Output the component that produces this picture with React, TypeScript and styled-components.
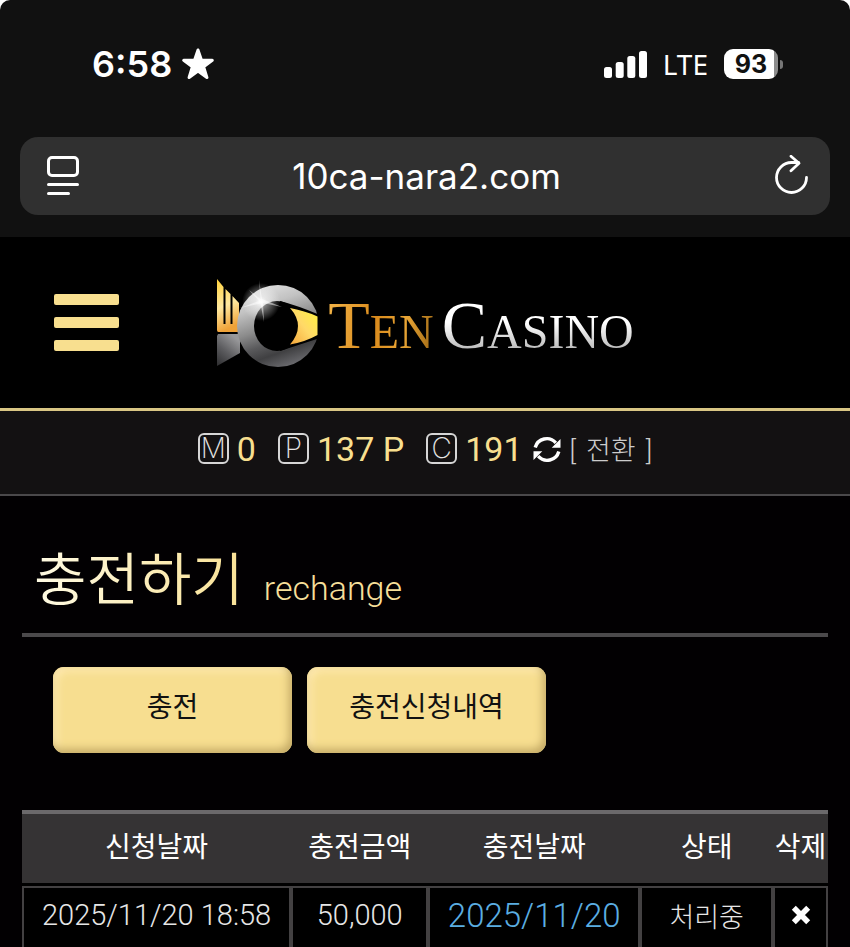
import React from "react";
import styled, { createGlobalStyle } from "styled-components";

const kr = `Roboto, "Noto Sans CJK KR", sans-serif`;
const gold = "#f8df8f";

const GlobalStyle = createGlobalStyle`
  *, *::before, *::after { box-sizing: border-box; }
  body { margin: 0; background: #fff; }
  body::-webkit-scrollbar { display: none; }
  button { font: inherit; border: 0; background: none; padding: 0; cursor: pointer; color: inherit; }
`;

const Page = styled.div`
  height: 100vh;
  overflow: hidden auto;
  scrollbar-width: none;
  background: #020002;
  border-radius: 10px 10px 0 0;
  font-family: ${kr};
  font-weight: 300;
  color: #fff;
`;

const Chrome = styled.header`
  background: #111;
  padding: 40px 20px 22px;
`;

const StatusBar = styled.div`
  display: flex;
  align-items: center;
  justify-content: space-between;
  height: 48px;
  margin-bottom: 49px;
  padding: 0 47px 0 72px;
`;

const StatusGroup = styled.div<{ $gap: number }>`
  display: flex;
  align-items: center;
  gap: ${(p) => p.$gap}px;
`;

const Clock = styled.time`
  font: 600 36px Inter, sans-serif;
`;

const Network = styled.span`
  font: 400 28px/32px "Noto Sans", sans-serif;
`;

const Battery = styled.div`
  display: flex;
  align-items: center;
  gap: 2px;
`;

const BatteryBody = styled.span`
  display: grid;
  place-items: center;
  width: 54px;
  height: 30px;
  border-radius: 9px;
  background: linear-gradient(90deg, #fff 93%, #8c8c8c 93%);
  color: #111;
  font: 700 25px/30px Inter, sans-serif;
`;

const BatteryTip = styled.span`
  width: 3px;
  height: 9px;
  border-radius: 0 4px 4px 0;
  background: #777;
`;

const AddressBar = styled.div`
  display: flex;
  align-items: center;
  justify-content: space-between;
  height: 78px;
  padding: 0 20px 0 25px;
  border-radius: 18px;
  background: #303030;
`;

const Address = styled.span`
  font: 400 35px Inter, sans-serif;
`;

const IconButton = styled.button`
  display: grid;
  place-items: center;
`;

const SiteHeader = styled.div`
  display: grid;
  grid-template-columns: 1fr auto 1fr;
  align-items: center;
  height: 174px;
  padding: 0 54px;
  background: #000;
  border-bottom: 3px solid #d9c684;
`;

const MenuButton = styled.button`
  display: flex;
  flex-direction: column;
  gap: 12px;
  width: 65px;
`;

const MenuBar = styled.span`
  height: 11px;
  width: 100%;
  border-radius: 2px;
  background: ${gold};
`;

const Logo = styled.a`
  display: flex;
  align-items: center;
  gap: 8px;
  text-decoration: none;
`;

const LogoWord = styled.span<{ $fill: string }>`
  display: block;
  padding-top: 12px;
  font: 400 48px/80px "Liberation Serif", serif;
  color: transparent;
  background: ${(p) => p.$fill};
  background-clip: text;
  -webkit-background-clip: text;
  &::first-letter { font-size: 68px; }
`;

const Balance = styled.div`
  display: flex;
  align-items: center;
  justify-content: center;
  height: 85px;
  padding-bottom: 8px;
  background: #131112;
  border-bottom: 2px solid #4a484a;
`;

const Badge = styled.span`
  display: grid;
  place-items: center;
  width: 31px;
  height: 31px;
  margin-right: 8px;
  border: 2px solid #d6d6d6;
  border-radius: 6px;
  color: #e4e4e4;
  font: 200 28px/27px Inter, sans-serif;
`;

const Amount = styled.span`
  margin-right: 22px;
  color: ${gold};
  font-size: 34px;
  font-weight: 400;
  &:last-of-type { margin-right: 10px; }
`;

const Convert = styled.button`
  display: flex;
  align-items: baseline;
  gap: 10px;
  margin-left: 9px;
  color: #ccc;
  font-size: 27px;
`;

const Main = styled.main`
  padding: 42px 22px 0;
`;

const Title = styled.h1`
  display: flex;
  align-items: baseline;
  gap: 20px;
  height: 99px;
  margin: 0;
  padding: 3px 0 0 12px;
  border-bottom: 4px solid #4b494b;
  font-weight: 350;
  font-size: 57px;
  line-height: 80px;
`;

const TitleText = styled.span`
  color: transparent;
  background: linear-gradient(90deg, #fffbe4, #f9e195);
  background-clip: text;
  -webkit-background-clip: text;
`;

const Subtitle = styled.small`
  color: #f6df9a;
  font-size: 34px;
  font-weight: 300;
`;

const Tabs = styled.nav`
  display: flex;
  gap: 15px;
  margin: 30px 31px 57px;
`;

const Tab = styled.button`
  width: 239px;
  height: 86px;
  padding-bottom: 10px;
  border-radius: 11px;
  background: #f7de90;
  color: #111;
  font-size: 28px;
  font-weight: 400;
  box-shadow: inset -3px -4px 8px #c4aa65, inset 4px 4px 8px #ffebb2;
`;

const History = styled.table`
  width: 100%;
  table-layout: fixed;
  border-collapse: separate;
  border-spacing: 0;
`;

const Col = styled.col<{ $w: number }>`
  width: ${(p) => p.$w}%;
`;

const Th = styled.th`
  height: 76px;
  padding: 0 0 8px;
  background: #353334;
  background-clip: padding-box;
  border-top: 4px solid #6b696b;
  border-bottom: 3px solid #000;
  font-size: 28px;
  font-weight: 400;
  white-space: nowrap;
`;

const Td = styled.td<{ $size?: number; $accent?: boolean }>`
  height: 78px;
  padding: 0 0 20px;
  text-align: center;
  white-space: nowrap;
  border: 2px solid #434142;
  background: #000;
  color: ${(p) => (p.$accent ? "#5baee2" : "#e6e6e6")};
  font-size: ${(p) => p.$size ?? 29}px;
`;

const StarIcon = () => (
  <svg width="32" height="32" viewBox="0 0 32 32" fill="#fff" stroke="#fff" strokeWidth="3" strokeLinejoin="round" aria-hidden>
    <path d="M16 2l3.500 10.300H30.300l-8.700 6.500 3.300 10.700L16 23l-8.900 6.500 3.300-10.700L1.700 12.300h10.800z" />
  </svg>
);

const SignalIcon = () => (
  <svg width="43" height="27" viewBox="0 0 43 27" fill="#fff" aria-hidden>
    <rect x="0" y="16" width="8" height="11" rx="2.500" />
    <rect x="11.700" y="11" width="8" height="16" rx="2.500" />
    <rect x="23.300" y="5" width="8" height="22" rx="2.500" />
    <rect x="35" y="0" width="8" height="27" rx="2.500" />
  </svg>
);

const ReaderIcon = () => (
  <svg width="36" height="42" viewBox="0 0 36 42" fill="none" stroke="#fff" strokeWidth="3" strokeLinecap="round" aria-hidden>
    <rect x="3.500" y="2.500" width="29" height="18" rx="3.500" />
    <path d="M3.500 29.500h29M3.500 38.500h20" />
  </svg>
);

const ReloadIcon = () => (
  <svg width="38" height="42" viewBox="0 0 38 42" fill="none" stroke="#fff" strokeWidth="2.800" strokeLinecap="round" strokeLinejoin="round" aria-hidden>
    <path d="M34.500 22.500a15 15 0 1 1-15-15h7" />
    <path d="M19 1.200l8 7-8 7.600" />
  </svg>
);

const SyncIcon = () => (
  <svg width="28" height="28" viewBox="0 0 28 28" fill="none" aria-hidden>
    <path d="M2.200 12.500A12 12 0 0 1 22.800 7.800M25.800 16.500A12 12 0 0 1 5.200 21.200" stroke="#fff" strokeWidth="3.400" />
    <path d="M27.500 4v8.800H18.700zM.500 25V16.200h8.800z" fill="#fff" />
  </svg>
);

const CrossIcon = () => (
  <svg width="20" height="20" viewBox="0 0 20 20" stroke="#fff" strokeWidth="5.600" aria-hidden>
    <path d="M2.800 2.800l14.400 14.400M17.200 2.800l-14.400 14.400" />
  </svg>
);

const Emblem = () => (
  <svg width="104" height="98" viewBox="0 0 104 98" aria-hidden>
    <defs>
      <linearGradient id="ring" x1="0.250" y1="0" x2="0.600" y2="1">
        <stop offset="0" stopColor="#e2e2e2" />
        <stop offset="0.250" stopColor="#c2c2c2" />
        <stop offset="0.500" stopColor="#8c8c8c" />
        <stop offset="0.680" stopColor="#5a5a5c" />
        <stop offset="0.820" stopColor="#404042" />
        <stop offset="1" stopColor="#6a6a6e" />
      </linearGradient>
      <linearGradient id="crown" x1="0" y1="0" x2="0.200" y2="1">
        <stop offset="0" stopColor="#ffd23c" />
        <stop offset="0.550" stopColor="#ffe9a0" />
        <stop offset="1" stopColor="#efa238" />
      </linearGradient>
      <linearGradient id="beam" x1="0" y1="1" x2="1" y2="0">
        <stop offset="0" stopColor="#f5a63a" />
        <stop offset="0.500" stopColor="#ffd968" />
        <stop offset="1" stopColor="#fff43c" />
      </linearGradient>
      <linearGradient id="base" x1="0" y1="1" x2="0.600" y2="0">
        <stop offset="0" stopColor="#2c2c2e" />
        <stop offset="0.500" stopColor="#5c5c5f" />
        <stop offset="1" stopColor="#98989a" />
      </linearGradient>
      <radialGradient id="flare">
        <stop offset="0" stopColor="#fff" />
        <stop offset="0.300" stopColor="#fff" stopOpacity="0.500" />
        <stop offset="1" stopColor="#fff" stopOpacity="0" />
      </radialGradient>
    </defs>
    <path d="M1 5L7.500 13V50H9.500V15L14.500 20V50H16.500V22L23 29V58H2.500Q1 58 1 56z" fill="url(#crown)" />
    <path d="M2 60H24V79L1 92V62z" fill="url(#base)" />
    <circle cx="62" cy="52" r="41" fill="url(#ring)" />
    <ellipse cx="61" cy="52" rx="23" ry="25" fill="#000" />
    <path d="M64 27Q80 31 104 41V64L64 77z" fill="#000" />
    <path d="M74 34Q90 37 101.500 42.500V61Q89 68 74 70.500Q90 52 74 34z" fill="url(#beam)" />
    <circle cx="45" cy="28" r="19" fill="url(#flare)" />
    <path d="M43 6L46 25L66 33L47 29L48 48L44.500 29.500L24 34L43 27L33 16L44.500 25z" fill="#fff" opacity="0.500" />
  </svg>
);

const columns = [
  { label: "신청날짜", width: 33.4 },
  { label: "충전금액", width: 17 },
  { label: "충전날짜", width: 26.3 },
  { label: "상태", width: 16.5 },
  { label: "삭제", width: 6.8 },
];

export default function App() {
  return (
    <>
      <GlobalStyle />
      <Page>
        <Chrome>
          <StatusBar>
            <StatusGroup $gap={10}>
              <Clock>6:58</Clock>
              <StarIcon />
            </StatusGroup>
            <StatusGroup $gap={16}>
              <SignalIcon />
              <Network>LTE</Network>
              <Battery>
                <BatteryBody>93</BatteryBody>
                <BatteryTip />
              </Battery>
            </StatusGroup>
          </StatusBar>
          <AddressBar>
            <IconButton aria-label="Page menu"><ReaderIcon /></IconButton>
            <Address>10ca-nara2.com</Address>
            <IconButton aria-label="Reload"><ReloadIcon /></IconButton>
          </AddressBar>
        </Chrome>
        <SiteHeader>
          <MenuButton aria-label="Menu">
            <MenuBar />
            <MenuBar />
            <MenuBar />
          </MenuButton>
          <Logo href="#">
            <Emblem />
            <LogoWord $fill="linear-gradient(100deg, #f5b84c, #d98a1c 45%, #e9a535 70%, #94600f)">TEN</LogoWord>
            <LogoWord $fill="linear-gradient(180deg, #fff 50%, #b4b4b4 80%)">CASINO</LogoWord>
          </Logo>
        </SiteHeader>
        <Balance>
          <Badge>M</Badge>
          <Amount>0</Amount>
          <Badge>P</Badge>
          <Amount>137 P</Amount>
          <Badge>C</Badge>
          <Amount>191</Amount>
          <IconButton aria-label="Refresh"><SyncIcon /></IconButton>
          <Convert>
            <span>[</span>
            <span>전환</span>
            <span>]</span>
          </Convert>
        </Balance>
        <Main>
          <Title>
            <TitleText>충전하기</TitleText>
            <Subtitle>rechange</Subtitle>
          </Title>
          <Tabs>
            <Tab>충전</Tab>
            <Tab>충전신청내역</Tab>
          </Tabs>
          <History>
            <colgroup>
              {columns.map((c) => <Col key={c.label} $w={c.width} />)}
            </colgroup>
            <thead>
              <tr>
                {columns.map((c) => <Th key={c.label} scope="col">{c.label}</Th>)}
              </tr>
            </thead>
            <tbody>
              <tr>
                <Td>2025/11/20 18:58</Td>
                <Td>50,000</Td>
                <Td $size={33} $accent>2025/11/20</Td>
                <Td $size={27}>처리중</Td>
                <Td>
                  <button aria-label="삭제"><CrossIcon /></button>
                </Td>
              </tr>
            </tbody>
          </History>
        </Main>
      </Page>
    </>
  );
}
